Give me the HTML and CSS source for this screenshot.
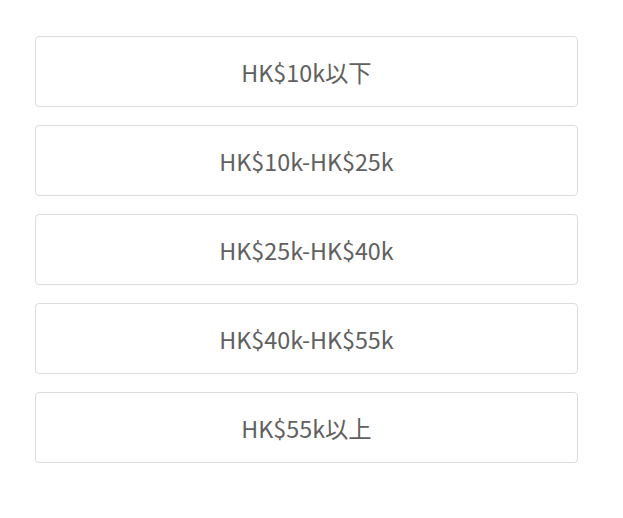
FILE: index.html
```html
<!DOCTYPE html>
<html lang="zh-HK">
<head>
    <meta charset="UTF-8">
    <meta name="viewport" content="width=device-width, initial-scale=1.0">
    <title>Salary Range</title>
    <link rel="stylesheet" href="styles.css">
</head>
<body>
    <div class="options">
        <button class="option">HK$10k以下</button>
        <button class="option">HK$10k-HK$25k</button>
        <button class="option">HK$25k-HK$40k</button>
        <button class="option">HK$40k-HK$55k</button>
        <button class="option">HK$55k以上</button>
    </div>
</body>
</html>
```

FILE: styles.css
```css
/* Basic reset */
* {
    margin: 0;
    padding: 0;
    box-sizing: border-box;
}

body {
    font-family: "Noto Sans CJK SC", "Noto Sans", sans-serif;
    background-color: #fff;
}

/* List of range options */
.options {
    display: flex;
    flex-direction: column;
    gap: 18px;
    padding: 36px 45px 0 35px;
}

.option {
    height: 71px;
    background-color: #fff;
    border: 1px solid #dcdcdc;
    border-radius: 4px;
    font-family: inherit;
    font-size: 23.3px;
    color: #606060;
    cursor: pointer;
}
```
